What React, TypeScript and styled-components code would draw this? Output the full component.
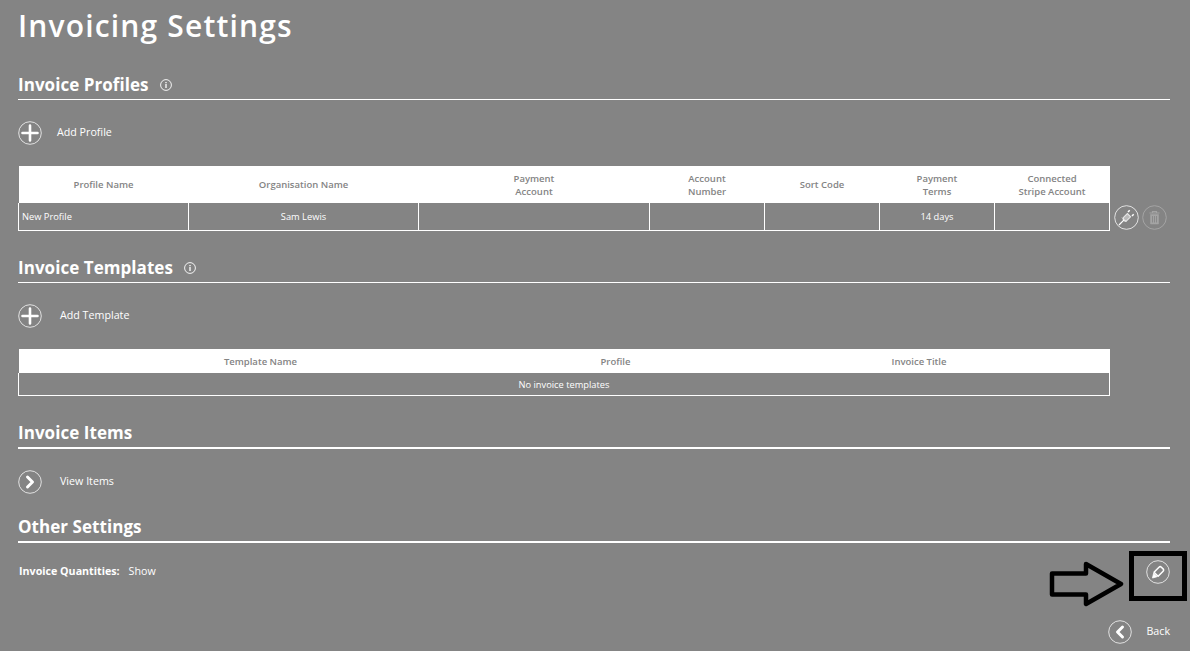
import React from 'react';
import styled, { createGlobalStyle } from 'styled-components';

const GlobalStyle = createGlobalStyle`
  html, body {
    margin: 0;
    padding: 0;
    background: #848484;
  }
  body {
    font-family: 'Open Sans', 'Liberation Sans', sans-serif;
    color: #fff;
  }
`;

const profileColumns = [
  { title: 'Profile Name', width: 170 },
  { title: 'Organisation Name', width: 230 },
  { title: 'Payment\nAccount', width: 231 },
  { title: 'Account\nNumber', width: 115 },
  { title: 'Sort Code', width: 115 },
  { title: 'Payment\nTerms', width: 115 },
  { title: 'Connected\nStripe Account', width: 115 },
];

const templateColumns = [
  { title: 'Template Name', width: 484 },
  { title: 'Profile', width: 226 },
  { title: 'Invoice Title', width: 381 },
];

function InfoIcon() {
  return (
    <svg width="12" height="12" viewBox="0 0 12 12" fill="none" stroke="#fff">
      <circle cx="6" cy="6" r="5.4" strokeWidth="0.9" />
      <path d="M6 5v4M6 3v1.2" strokeWidth="1.3" />
    </svg>
  );
}

function PlusIcon() {
  return (
    <svg width="24" height="24" viewBox="0 0 24 24" fill="none" stroke="#fff">
      <circle cx="12" cy="12" r="11.3" strokeWidth="1" opacity="0.75" />
      <path d="M12 4.5v15M4.5 12h15" strokeWidth="2.6" strokeLinecap="round" />
    </svg>
  );
}

function ChevronIcon({ flip }: { flip?: boolean }) {
  return (
    <svg width="24" height="24" viewBox="0 0 24 24" fill="none" stroke="#fff">
      <circle cx="12" cy="12" r="11.3" strokeWidth="1" opacity="0.75" />
      <path
        d={flip ? 'M14.5 7l-5 5 5 5' : 'M9.5 7l5 5-5 5'}
        strokeWidth="3"
        strokeLinecap="round"
        strokeLinejoin="round"
      />
    </svg>
  );
}

function PlugIcon() {
  return (
    <svg width="25" height="25" viewBox="0 0 25 25" fill="none" stroke="#fff">
      <circle cx="12.5" cy="12.5" r="11.8" strokeWidth="1" opacity="0.75" />
      <path
        d="M9.800 12.200l3.600-3.600 3.200 3.200-3.600 3.600c-.9.900-2.300.9-3.200 0s-.9-2.300 0-3.200z"
        stroke="#e6e6e6"
        fill="#b9b9b9"
        strokeWidth="1.100"
      />
      <path d="M14 7l1.700-1.700M18 11l1.700-1.700" strokeWidth="1.500" />
      <path d="M9.800 15.200L5 20" strokeWidth="1.200" />
      <path d="M8 12.500l4.500 4.500" strokeWidth="0.900" opacity="0.8" />
    </svg>
  );
}

function TrashIcon() {
  return (
    <svg width="25" height="25" viewBox="0 0 25 25" fill="none" stroke="#a4a4a4">
      <circle cx="12.5" cy="12.5" r="11.8" strokeWidth="1" />
      <path d="M7.500 8h10M10.500 8V6.500h4V8" strokeWidth="1.200" />
      <path d="M8.500 9.500h8V19h-8z" fill="#a4a4a4" strokeWidth="0.500" />
      <path d="M10.500 11v6.500M12.500 11v6.500M14.500 11v6.500" stroke="#848484" strokeWidth="0.800" />
    </svg>
  );
}

function EditIcon() {
  return (
    <svg width="24" height="24" viewBox="0 0 24 24" fill="none" stroke="#fff">
      <circle cx="12" cy="12" r="11.3" strokeWidth="1" opacity="0.75" />
      <path
        d="M8 12.200l5-5c.7-.7 1.700-.7 2.400 0l1.700 1.700c.7.700.7 1.700 0 2.400l-5 5z"
        strokeWidth="1.500"
        strokeLinejoin="round"
      />
      <path d="M7.600 13.200l3.500 3.500-4.600 1.300z" fill="#fff" strokeWidth="0.800" strokeLinejoin="round" />
    </svg>
  );
}

function App() {
  return (
    <Page>
      <GlobalStyle />
      <PageTitle>Invoicing Settings</PageTitle>

      <ProfilesHeading>
        <SectionTitle>Invoice Profiles</SectionTitle>
        <InfoIcon />
      </ProfilesHeading>
      <ActionRow>
        <PlusIcon />
        <ActionLabel $gap={15}>Add Profile</ActionLabel>
      </ActionRow>
      <TableRow>
        <DataTable>
          <colgroup>
            {profileColumns.map((column) => (
              <col key={column.title} width={column.width} />
            ))}
          </colgroup>
          <thead>
            <tr>
              {profileColumns.map((column) => (
                <HeadCell key={column.title} $height={37}>
                  {column.title}
                </HeadCell>
              ))}
            </tr>
          </thead>
          <tbody>
            <tr>
              <BodyCell $left>New Profile</BodyCell>
              <BodyCell>Sam Lewis</BodyCell>
              <BodyCell />
              <BodyCell />
              <BodyCell />
              <BodyCell>14 days</BodyCell>
              <BodyCell />
            </tr>
          </tbody>
        </DataTable>
        <RowActions>
          <PlugIcon />
          <TrashIcon />
        </RowActions>
      </TableRow>

      <TemplatesHeading>
        <SectionTitle>Invoice Templates</SectionTitle>
        <InfoIcon />
      </TemplatesHeading>
      <ActionRow>
        <PlusIcon />
        <ActionLabel $gap={18}>Add Template</ActionLabel>
      </ActionRow>
      <TableRow>
        <DataTable>
          <colgroup>
            {templateColumns.map((column) => (
              <col key={column.title} width={column.width} />
            ))}
          </colgroup>
          <thead>
            <tr>
              {templateColumns.map((column) => (
                <HeadCell key={column.title} $height={24}>
                  {column.title}
                </HeadCell>
              ))}
            </tr>
          </thead>
          <tbody>
            <tr>
              <EmptyCell colSpan={3}>No invoice templates</EmptyCell>
            </tr>
          </tbody>
        </DataTable>
      </TableRow>

      <ItemsHeading $thick>
        <SectionTitle>Invoice Items</SectionTitle>
      </ItemsHeading>
      <ItemsRow>
        <ChevronIcon />
        <ActionLabel $gap={18}>View Items</ActionLabel>
      </ItemsRow>

      <OtherHeading $thick>
        <SectionTitle>Other Settings</SectionTitle>
      </OtherHeading>
      <SettingRow>
        <SettingName>Invoice Quantities:</SettingName>
        <SettingValue>Show</SettingValue>
        <EditSlot>
          <EditIcon />
        </EditSlot>
      </SettingRow>

      <BackRow>
        <ChevronIcon flip />
        <ActionLabel $gap={14}>Back</ActionLabel>
      </BackRow>

      <CalloutArrow width="76" height="46" viewBox="0 0 76 46" fill="none">
        <path
          d="M3 12.500H37V3l35 20-35 20V33.500H3z"
          stroke="#000"
          strokeWidth="4.500"
          strokeLinejoin="round"
        />
      </CalloutArrow>
      <CalloutBox />
    </Page>
  );
}

const Page = styled.div`
  position: relative;
  box-sizing: border-box;
  width: 1190px;
  height: 651px;
  padding: 0 20px 0 18px;
  overflow: hidden;
  background: #848484;
`;

const PageTitle = styled.h1`
  margin: 0;
  padding-top: 5px;
  font-size: 30px;
  line-height: 41px;
  font-weight: 600;
  letter-spacing: 1.17px;
`;

const Heading = styled.div<{ $thick?: boolean }>`
  display: flex;
  align-items: center;
  gap: 11px;
  height: 28px;
  border-bottom: ${({ $thick }) => ($thick ? '2px' : '1px')} solid #fff;
`;

const ProfilesHeading = styled(Heading)`
  margin-top: 25px;
`;

const TemplatesHeading = styled(Heading)`
  margin-top: 23px;
`;

const ItemsHeading = styled(Heading)`
  margin-top: 23px;
`;

const OtherHeading = styled(Heading)`
  margin-top: 19px;
`;

const SectionTitle = styled.h2`
  margin: 0;
  font-size: 17px;
  line-height: 24px;
  font-weight: 700;
  letter-spacing: 0.05px;
`;

const ActionRow = styled.div`
  display: flex;
  align-items: center;
  height: 24px;
  margin-top: 21px;
`;

const ItemsRow = styled(ActionRow)`
  margin-top: 21px;
`;

const ActionLabel = styled.span<{ $gap: number }>`
  margin-left: ${({ $gap }) => $gap}px;
  padding-bottom: 3px;
  font-size: 10.7px;
  color: #fff;
`;

const TableRow = styled.div`
  display: flex;
  align-items: flex-end;
  margin-top: 21px;
`;

const DataTable = styled.table`
  width: 1091px;
  table-layout: fixed;
  border-collapse: collapse;
  font-size: 9.5px;
`;

const HeadCell = styled.th<{ $height: number }>`
  height: ${({ $height }) => $height}px;
  padding: 0;
  background: #fff;
  color: #848484;
  font-weight: 600;
  line-height: 13px;
  white-space: pre-line;
  text-align: center;
`;

const BodyCell = styled.td<{ $left?: boolean }>`
  height: 27px;
  padding: 0 0 0 ${({ $left }) => ($left ? '3px' : '0')};
  border: 1px solid #fff;
  border-top: 0;
  text-align: ${({ $left }) => ($left ? 'left' : 'center')};
  font-size: 9.3px;
  color: #fff;
`;

const EmptyCell = styled.td`
  height: 22px;
  padding: 0;
  border: 1px solid #fff;
  border-top: 0;
  text-align: center;
  font-size: 9.3px;
  color: #fff;
`;

const RowActions = styled.div`
  display: flex;
  gap: 3px;
  margin-left: 4px;
  margin-bottom: 1px;
`;

const SettingRow = styled.div`
  display: flex;
  align-items: center;
  height: 24px;
  margin-top: 17px;
  padding-left: 1px;
  font-size: 10.7px;
`;

const SettingName = styled.span`
  padding-bottom: 2px;
  font-weight: 700;
`;

const SettingValue = styled.span`
  padding-bottom: 2px;
  margin-left: 9px;
`;

const EditSlot = styled.div`
  display: flex;
  margin-left: auto;
`;

const BackRow = styled.div`
  position: absolute;
  right: 20px;
  top: 620px;
  display: flex;
  align-items: center;
  height: 24px;
`;

const CalloutArrow = styled.svg`
  position: absolute;
  left: 1049px;
  top: 561px;
`;

const CalloutBox = styled.div`
  position: absolute;
  left: 1129px;
  top: 551px;
  width: 48px;
  height: 40px;
  border: 5px solid #000;
`;

export default App;
